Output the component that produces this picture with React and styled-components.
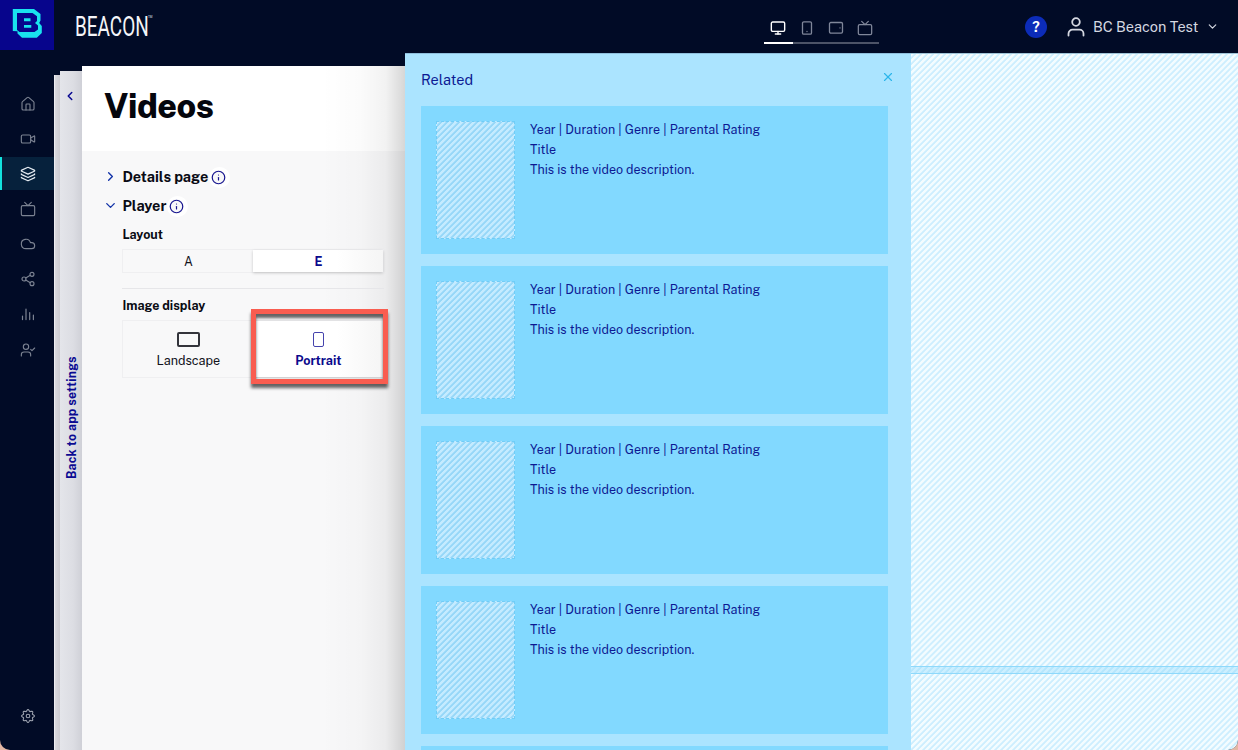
import React from "react";
import styled, { createGlobalStyle, css } from "styled-components";
import { House, Video, Layers, Tv, Cloud, Share2, UserCheck, Monitor, ChevronLeft, ChevronRight, ChevronDown, X, Info } from "lucide-react";

const Global = createGlobalStyle`
  * { box-sizing: border-box; }
  html, body, #root { height: 100%; }
  body { margin: 0; overflow: hidden; background: #e3b7a4; font-family: "Public Sans", Inter, "Liberation Sans", sans-serif; }
  svg { display: block; flex: none; }
`;

const Window = styled.div`
  width: 1238px;
  height: 750px;
  display: flex;
  flex-direction: column;
  overflow: hidden;
  background: #010b26;
  border-radius: 0 0 10px 10px;
`;

const Header = styled.header`
  flex: none;
  height: 53px;
  display: flex;
  align-items: flex-start;
`;

const LogoTile = styled.div`
  width: 54px;
  height: 50px;
  padding: 8px 0 0 12px;
  background: #07058c;
`;

const Wordmark = styled.div`
  display: flex;
  width: 689px;
  margin: 8px 0 0 21px;
`;

const WordText = styled.span`
  display: block;
  width: 73px;
  font: 400 28.5px/38px Roboto, sans-serif;
  color: #f4f5f8;
  white-space: nowrap;
  transform: scaleX(${(p) => p.$squeeze});
  transform-origin: left;
`;

const Trademark = styled.span`
  font-size: 3px;
  line-height: 5px;
  margin-top: 7px;
  color: #dfe2ea;
`;

const DeviceTabs = styled.nav`
  display: flex;
  width: 115px;
  height: 44px;
  border-bottom: 2px solid #4c5367;
`;

const DeviceTab = styled.div`
  flex: 1;
  height: 44px;
  display: flex;
  justify-content: center;
  padding-top: 20px;
  color: ${(p) => (p.$active ? "#fff" : "#80879a")};
  border-bottom: 2px solid ${(p) => (p.$active ? "#fff" : "transparent")};
`;

const Account = styled.div`
  display: flex;
  align-items: center;
  height: 53px;
  margin-left: auto;
  padding-right: 19px;
  color: #d5d8e1;
`;

const HelpBadge = styled.span`
  width: 22px;
  height: 22px;
  margin-right: 20px;
  border-radius: 50%;
  background: #0c2cb8;
  color: #fff;
  font-size: 14px;
  font-weight: 700;
  line-height: 22px;
  text-align: center;
`;

const AccountName = styled.span`
  width: 105px;
  margin: 0 8px 0 8px;
  font-size: 14.5px;
  letter-spacing: ${(p) => p.$track}px;
  white-space: nowrap;
`;

const Body = styled.div`
  flex: 1;
  min-height: 0;
  display: flex;
`;

const Rail = styled.nav`
  flex: none;
  width: 54px;
  display: flex;
  flex-direction: column;
  padding: 34px 0 18px;
`;

const RailItem = styled.div`
  height: 33px;
  margin-bottom: 2.2px;
  display: flex;
  align-items: center;
  justify-content: center;
  border-left: 2px solid transparent;
  color: #7c8392;
  ${(p) => p.$active && css`background: #06213c; border-color: #12e2df; color: #e4ebf1;`}
  ${(p) => p.$last && css`margin: auto 0 0; color: #9aa0ad;`}
`;

const BackSheet = styled.div`
  flex: none;
  width: 6px;
  margin-top: 22px;
  background: linear-gradient(90deg, #d9d9de, #cbcbd1);
  border-left: 1px solid #ededf1;
`;

const BackTab = styled.div`
  flex: none;
  width: 22px;
  margin-top: 18px;
  padding: 18px 0 0 3px;
  background: linear-gradient(90deg, #e4e5ea, #dcdde3 60%, #cfd0d7);
  color: #0b0a92;
`;

const BackLabel = styled.div`
  margin-top: 252px;
  height: 124px;
  width: 18px;
  writing-mode: vertical-rl;
  transform: rotate(180deg);
  font-size: 12.3px;
  font-weight: 700;
  line-height: 18px;
  white-space: nowrap;
  letter-spacing: ${(p) => p.$track}px;
`;

const edgeShade = "linear-gradient(90deg, transparent 74%, rgba(0,0,0,.015) 86%, rgba(0,0,0,.05) 94%, rgba(0,0,0,.16))";

const Settings = styled.section`
  flex: none;
  width: 323px;
  margin-top: 13px;
  background: ${edgeShade}, #f8f8f9;
`;

const SettingsHead = styled.div`
  height: 85px;
  padding: 16px 0 0 22px;
  background: ${edgeShade}, #fff;
`;

const PageTitle = styled.h1`
  margin: 0;
  font-size: 34px;
  line-height: 48px;
  font-weight: 800;
  letter-spacing: ${(p) => p.$track}px;
  color: #05060d;
`;

const SettingsBody = styled.div`
  width: 302px;
  padding: 11px 0 0 21px;
`;

const AccordionRow = styled.div`
  display: flex;
  align-items: center;
  height: 29px;
  color: #1233a8;
`;

const AccordionTitle = styled.span`
  margin: 0 4px 0 4.4px;
  width: ${(p) => p.$w}px;
  font-size: 14.5px;
  font-weight: 700;
  letter-spacing: ${(p) => p.$track}px;
  color: #0a0b14;
  white-space: nowrap;
`;

const InfoMark = styled.span`
  display: flex;
  color: #16148f;
  border-radius: 50%;
  box-shadow: 1px 0 0 3px #fff;
  margin-top: 1px;
`;

const Group = styled.div`
  margin-left: 19.4px;
  width: 262px;
`;

const GroupLabel = styled.div`
  height: ${(p) => p.$h}px;
  padding-top: ${(p) => p.$pt}px;
  line-height: 28px;
  font-size: 12.5px;
  font-weight: 700;
  letter-spacing: ${(p) => p.$track}px;
  color: #0a0b14;
`;

const Segments = styled.div`
  display: flex;
  height: ${(p) => p.$h}px;
  border: 1px solid #efeff1;
`;

const Segment = styled.div`
  flex: 1;
  display: flex;
  flex-direction: column;
  align-items: center;
  justify-content: center;
  gap: 5px;
  font-size: 12.5px;
  line-height: 17px;
  color: #12131c;
  ${(p) => p.$tall && css`
    padding-top: 3px;
    font-size: 12.6px;
  `}
  ${(p) => p.$active && css`
    font-weight: 700;
    color: #0b0a8c;
    background: linear-gradient(90deg, #fff 65%, #f5f5f5);
    box-shadow: 0 1px 3px rgba(0,0,0,.2);
  `}
`;

const Divider = styled.div`
  height: 1px;
  margin-top: 15px;
  background: #e6e6e9;
`;

const Shape = styled.span`
  width: ${(p) => p.$w}px;
  height: 15px;
  border: ${(p) => p.$b}px solid ${(p) => p.$color};
  border-radius: 2px;
`;

const Callout = styled.div`
  position: absolute;
  left: 251px;
  top: 309px;
  width: 137px;
  height: 75px;
  border: 5px solid #f95d50;
  box-shadow: 0 4px 3px rgba(0,0,0,.6), inset 0 4px 3px rgba(0,0,0,.6);
`;

const Related = styled.section`
  flex: none;
  width: 506px;
  padding: 15px 23px 0 16px;
  background: #abe4ff;
  border-top: 1px solid #8fbfdc;
  overflow: hidden;
`;

const RelatedHead = styled.div`
  display: flex;
  justify-content: space-between;
  height: 37px;
  font-size: 14.5px;
  line-height: 21px;
  letter-spacing: ${(p) => p.$track}px;
  color: #0d1a93;
`;

const Close = styled.span`
  margin: 1px -7px 0 0;
  color: #2cb5ea;
`;

const Card = styled.article`
  display: flex;
  height: 148px;
  margin-bottom: 12.1px;
  padding: 15px;
  background: #82d9ff;
`;

const stripes = (light, dark) => css`
  background: repeating-linear-gradient(135deg, ${light} 0 1.5px, ${dark} 2.5px 3.5px, ${light} 4.24px);
`;

const Poster = styled.div`
  width: 79px;
  height: 118px;
  ${stripes("#c4ebff", "#96d7f8")}
  border: 1px dashed #6fcdf7;
`;

const CardText = styled.div`
  margin-left: 15px;
  margin-top: -1.5px;
  font-size: 12.5px;
  line-height: 20.3px;
  color: #0d1a93;
  white-space: nowrap;
`;

const Line = styled.div`
  letter-spacing: ${(p) => p.$track}px;
`;

const Preview = styled.section`
  flex: 1;
  display: flex;
  flex-direction: column;
  border-top: 1px solid #9fc4d8;
`;

const Pane = styled.div`
  height: ${(p) => p.$h};
  flex: ${(p) => (p.$h ? "none" : 1)};
  ${stripes("#f3fcff", "#cdeefe")}
`;

const PaneGap = styled.div`
  height: 8px;
  ${stripes("#ccefff", "#b5e6fd")}
  border: solid #8ed9fb;
  border-width: 1px 0;
`;

const stroke = { fill: "none", stroke: "currentColor", strokeWidth: 1.3, strokeLinecap: "round", strokeLinejoin: "round" };

const BeaconLogo = () => (
  <svg width="31" height="31" viewBox="0 0 31 31">
    <path fill="#19e3ee" d="M.8 1H22l6.500 5v6.500l-1.300 2.500 2.600 3v7l-5 4.700H10L5.500 25.500v-2.200L.8 23z" />
    <path fill="#07058c" fillRule="evenodd" d="M5 5h15.500L25 8.300V13l-2 2 3 2.600v3.900L22.500 24H7.500L5 22zM12 10.300v2.900h6.500v-2.900zM12 16.900v2.900h7.300v-2.900z" />
  </svg>
);

const TabletPortrait = () => (
  <svg width="16" height="16" viewBox="0 0 16 16" {...stroke}><rect x="3.500" y="1.800" width="9" height="12.400" rx="1.300" /><path d="M8 11.400v.1" /></svg>
);
const TabletLandscape = () => (
  <svg width="16" height="16" viewBox="0 0 16 16" {...stroke}><rect x="1.500" y="2.500" width="13" height="10.600" rx="1.300" /><path d="M12 7.800v.1" /></svg>
);
const BarChart = () => (
  <svg width="14" height="14" viewBox="0 0 14 14" {...stroke} strokeWidth="1.2"><path d="M1.500 8v3.600M5 1v10.600M8.700 4.500v7.100M12.400 7v4.600" /></svg>
);
const Person = () => (
  <svg width="18" height="20" viewBox="0 0 18 20" {...stroke} strokeWidth="1.8"><circle cx="9" cy="5" r="3.800" /><path d="M1.500 18.500v-1.800a4 4 0 0 1 4-4h7a4 4 0 0 1 4 4v1.800" /></svg>
);

const gearOutline = Array.from({ length: 64 }, (_, i) => {
  const angle = (i / 64) * Math.PI * 2;
  const radius = 5.6 + 0.85 * Math.cos(angle * 8);
  return `${(7 + radius * Math.cos(angle)).toFixed(2)},${(7 + radius * Math.sin(angle)).toFixed(2)}`;
}).join(" ");

const Gear = () => (
  <svg width="14" height="14" viewBox="0 0 14 14" {...stroke} strokeWidth="1.1">
    <polygon points={gearOutline} />
    <circle cx="7" cy="7" r="1.800" />
  </svg>
);

const railIcons = [House, Video, Layers, Tv, Cloud, Share2, BarChart, UserCheck];

const Disclosure = ({ icon: Icon, title, width, track }) => (
  <AccordionRow>
    <Icon size={15} strokeWidth={2.2} />
    <AccordionTitle $w={width} $track={track}>{title}</AccordionTitle>
    <InfoMark><Info size={15} strokeWidth={1.9} /></InfoMark>
  </AccordionRow>
);

const VideoCard = () => (
  <Card>
    <Poster />
    <CardText>
      <Line $track={0.045}>Year | Duration | Genre | Parental Rating</Line>
      <Line $track={0.03}>Title</Line>
      <Line $track={0.04}>This is the video description.</Line>
    </CardText>
  </Card>
);

export default function App() {
  return (
    <Window>
      <Global />
      <Header>
        <LogoTile><BeaconLogo /></LogoTile>
        <Wordmark><WordText $squeeze={0.665}>BEACON</WordText><Trademark>TM</Trademark></Wordmark>
        <DeviceTabs>
          <DeviceTab $active><Monitor size={16} strokeWidth={2.1} /></DeviceTab>
          <DeviceTab><TabletPortrait /></DeviceTab>
          <DeviceTab><TabletLandscape /></DeviceTab>
          <DeviceTab><Tv size={16} strokeWidth={1.9} /></DeviceTab>
        </DeviceTabs>
        <Account>
          <HelpBadge>?</HelpBadge>
          <Person />
          <AccountName $track={-0.02}>BC Beacon Test</AccountName>
          <ChevronDown size={13} strokeWidth={2.2} />
        </Account>
      </Header>
      <Body>
        <Rail>
          {railIcons.map((Icon, i) => (
            <RailItem key={i} $active={i === 2}><Icon size={16} strokeWidth={i === 2 ? 1.9 : 1.7} /></RailItem>
          ))}
          <RailItem $last><Gear /></RailItem>
        </Rail>
        <BackSheet />
        <BackTab>
          <ChevronLeft size={14} strokeWidth={2.6} />
          <BackLabel $track={0.17}>Back to app settings</BackLabel>
        </BackTab>
        <Settings>
          <SettingsHead><PageTitle $track={-0.45}>Videos</PageTitle></SettingsHead>
          <SettingsBody>
            <Disclosure icon={ChevronRight} title="Details page" width={84.6} track={-0.05} />
            <Disclosure icon={ChevronDown} title="Player" width={42.6} track={-0.08} />
            <Group>
              <GroupLabel $h={29} $pt={1} $track={0}>Layout</GroupLabel>
              <Segments $h={24}>
                <Segment>A</Segment>
                <Segment $active>E</Segment>
              </Segments>
              <Divider />
              <GroupLabel $h={31} $pt={3} $track={0.02}>Image display</GroupLabel>
              <Segments $h={58}>
                <Segment $tall><Shape $w={23} $b={2} $color="#33343b" />Landscape</Segment>
                <Segment $tall $active><Shape $w={11} $b={1} $color="#4543ad" />Portrait</Segment>
              </Segments>
            </Group>
          </SettingsBody>
        </Settings>
        <Related>
          <RelatedHead $track={0}>Related<Close><X size={14} strokeWidth={2} /></Close></RelatedHead>
          {[0, 1, 2, 3].map((n) => <VideoCard key={n} />)}
          <Card />
        </Related>
        <Preview>
          <Pane $h="612px" />
          <PaneGap />
          <Pane />
        </Preview>
      </Body>
      <Callout />
    </Window>
  );
}
